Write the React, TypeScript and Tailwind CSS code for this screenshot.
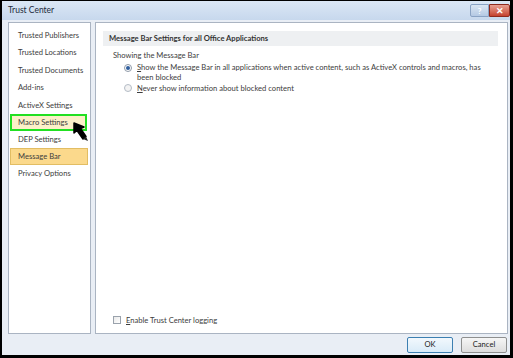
import React from "react";

const font = { fontFamily: 'Lato, "Open Sans", "Noto Sans", sans-serif' };

const navItems = [
  "Trusted Publishers",
  "Trusted Locations",
  "Trusted Documents",
  "Add-ins",
  "ActiveX Settings",
  "Macro Settings",
  "DEP Settings",
  "Message Bar",
  "Privacy Options",
];

function Cursor() {
  return (
    <svg className="absolute left-[71px] top-[121px]" width="18" height="20" viewBox="0 0 18 20">
      <path d="M1 1 L1 11 L4 8.5 L10 17 L13 14.5 L7.5 6.5 L11 5 Z" fill="#000" stroke="#000" strokeWidth="1.5" strokeLinejoin="round" />
      <path d="M10 17 L15 19 L13 14.5 Z" fill="#222" />
    </svg>
  );
}

export default function App() {
  return (
    <div
      className="relative w-[513px] h-[358px] bg-black border-l-2 border-r-[3px] border-b-[3px] border-t border-black overflow-hidden text-[#3d3d3d]"
      style={font}
    >
      <div className="flex flex-col w-full h-full bg-[#e9eef5]">
        {/* title bar */}
        <div className="flex items-center justify-between h-[20px] bg-gradient-to-b from-[#dbe7f5] to-[#c7d8ed] pl-[6px] pr-0">
          <span className="text-[8.5px] text-[#1e2b3c]">Trust Center</span>
          <div className="flex items-start self-start pt-[3px]">
            <div className="w-[19px] h-[13px] bg-gradient-to-b from-[#dbe6f3] to-[#b4c9e3] border border-[#8aa3c4] rounded-l-[2px] flex items-center justify-center text-[8px] text-white font-bold leading-none">
              ?
            </div>
            <div className="w-[21px] h-[13px] bg-gradient-to-b from-[#e8a093] to-[#c4402e] border border-[#8e2a1e] rounded-r-[2px] flex items-center justify-center text-[9px] text-white font-bold leading-none">
              ✕
            </div>
          </div>
        </div>
        {/* body */}
        <div className="flex flex-1 gap-[4px] pl-[6px] pr-[2px] pt-[2px]">
          {/* left nav */}
          <div className="relative w-[83px] h-[312px] bg-white border border-[#aab4c2] pt-[4px] px-[1px]">
            <div className="flex flex-col">
              {navItems.map((item) => {
                const isMacro = item === "Macro Settings";
                const isMsg = item === "Message Bar";
                let cls = "h-[17.4px] flex items-center pl-[8px] text-[7.6px] whitespace-nowrap";
                if (isMacro)
                  cls =
                    "h-[17px] flex items-center pl-[6px] text-[7.6px] whitespace-nowrap bg-[#fdf0c8] border-2 border-[#22e022] mr-[2px]";
                if (isMsg)
                  cls =
                    "h-[17px] flex items-center pl-[7px] text-[7.6px] whitespace-nowrap bg-[#fbd98c] border border-[#e2bd63] mr-[1px]";
                return (
                  <div key={item} className={cls}>
                    {item}
                  </div>
                );
              })}
            </div>
          </div>
          {/* right panel */}
          <div className="flex flex-col flex-1 h-[312px] bg-white border border-[#aab4c2] pt-[8px] pl-[7px] pr-[9px]">
            <div className="h-[15px] bg-[#eef0f2] flex items-center pl-[6px] text-[7.6px] font-bold text-[#333]">
              Message Bar Settings for all Office Applications
            </div>
            <div className="pl-[10px] pt-[4px] text-[7.6px]">
              <div className="h-[11px] leading-[11px]">Showing the Message Bar</div>
              <div className="flex pl-[11px] pt-[1px]">
                <div className="mt-[2px] w-[8px] h-[8px] rounded-full border border-[#8f9aa8] bg-white flex items-center justify-center shrink-0">
                  <div className="w-[4px] h-[4px] rounded-full bg-[#2f5e9e]" />
                </div>
                <div className="pl-[5px] leading-[10px]">
                  <div className="whitespace-nowrap">
                    <span className="underline">S</span>how the Message Bar in all applications when active content, such as ActiveX controls and macros, has
                  </div>
                  <div>been blocked</div>
                </div>
              </div>
              <div className="flex items-center pl-[11px] pt-[1px]">
                <div className="w-[8px] h-[8px] rounded-full border border-[#b4bcc6] bg-[#f3f3f3] shrink-0" />
                <div className="pl-[5px] leading-[10px]">
                  <span className="underline">N</span>ever show information about blocked content
                </div>
              </div>
            </div>
            <div className="flex-1" />
            <div className="flex items-center pl-[10px] pb-[7px] text-[7.6px]">
              <div className="w-[8px] h-[8px] border border-[#9aa2ac] bg-gradient-to-br from-[#e9e9e9] to-white" />
              <div className="pl-[5px]">
                <span className="underline">E</span>nable Trust Center logging
              </div>
            </div>
          </div>
        </div>
        {/* buttons */}
        <div className="flex justify-end gap-[8px] pr-[3px] pb-[2px] pt-[3px]">
          <div className="w-[46px] h-[16px] border border-[#3c7fb1] rounded-[2px] bg-gradient-to-b from-[#f2f8fd] to-[#d9ebf8] flex items-center justify-center text-[7.6px] text-[#222]">
            OK
          </div>
          <div className="w-[46px] h-[16px] border border-[#8e8f8f] rounded-[2px] bg-gradient-to-b from-[#f6f6f6] to-[#dddddd] flex items-center justify-center text-[7.6px] text-[#222]">
            Cancel
          </div>
        </div>
      </div>
      <Cursor />
    </div>
  );
}
